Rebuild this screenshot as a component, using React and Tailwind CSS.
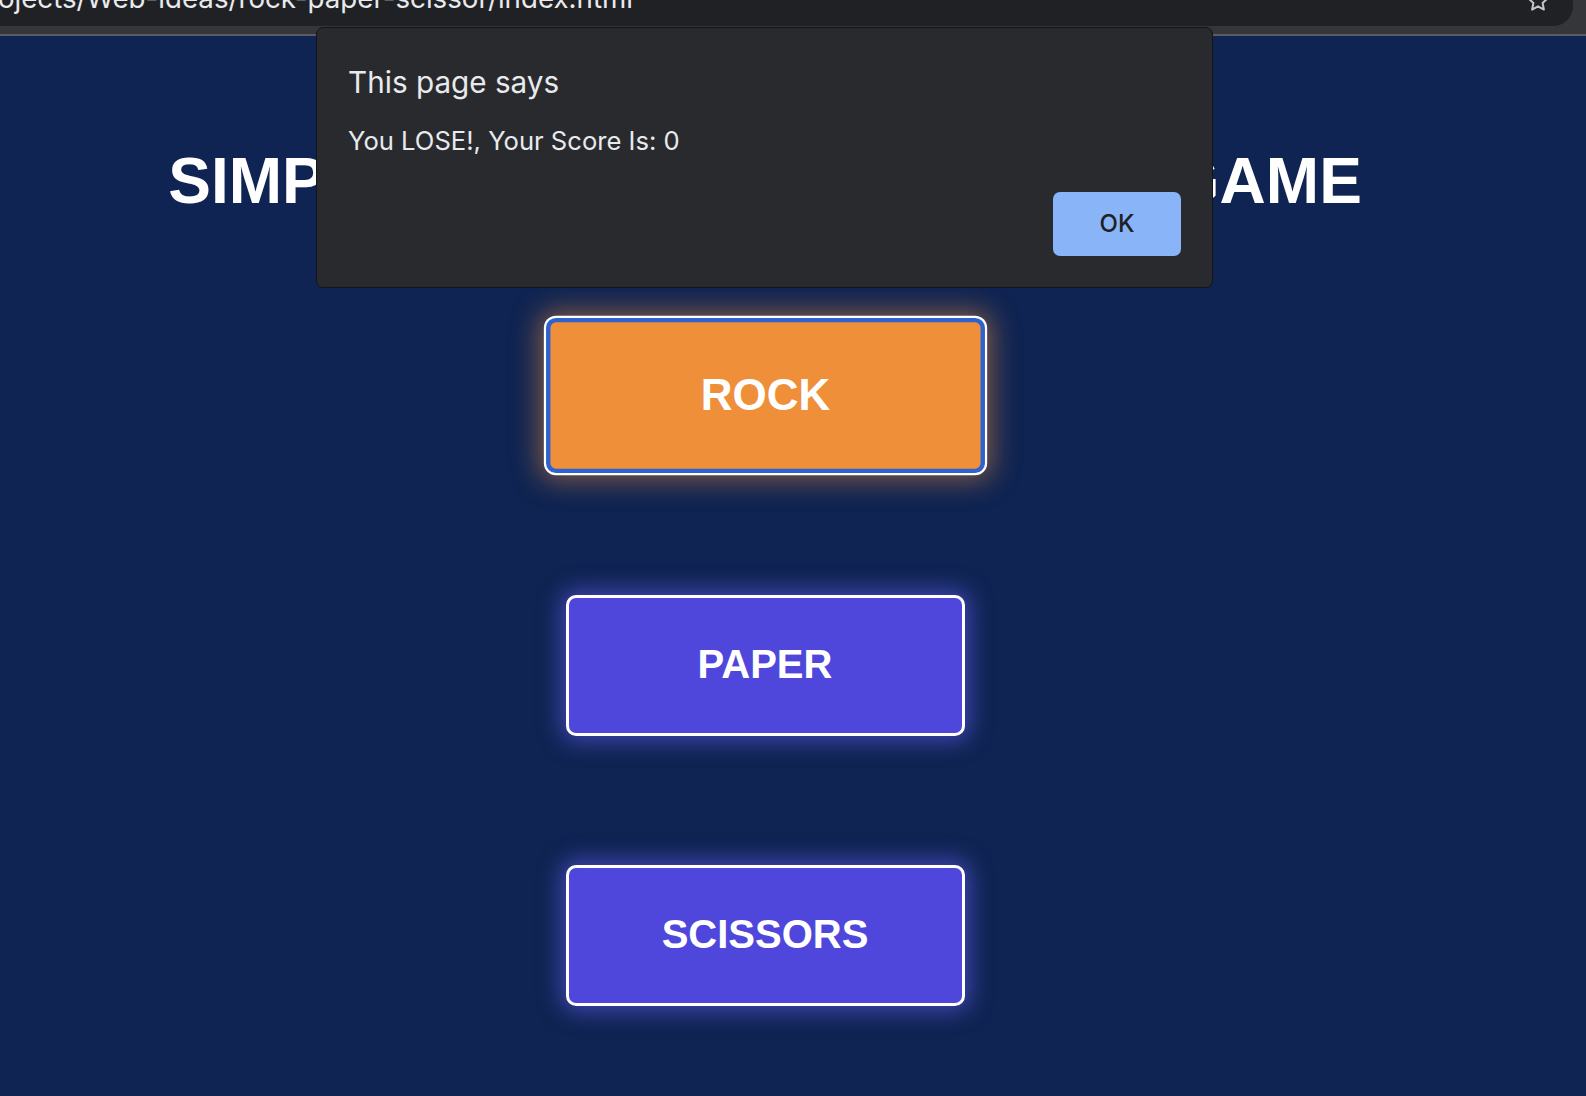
import React from "react";

function StarIcon() {
  return (
    <svg
      width="24"
      height="24"
      viewBox="0 0 24 24"
      fill="none"
      stroke="#c4c7c5"
      strokeWidth="2"
      strokeLinejoin="round"
      className="absolute right-[23px] top-[-11px]"
    >
      <path d="M12 2.5l2.9 6.1 6.6.8-4.9 4.6 1.3 6.6L12 17.3l-5.9 3.3 1.3-6.6-4.9-4.6 6.6-.8z" />
    </svg>
  );
}

export default function App() {
  return (
    <div className="relative h-[1096px] w-full overflow-hidden bg-[#0f2452]">
      {/* Browser chrome */}
      <div className="flex h-[36px] flex-col bg-[#35363a]">
        <div className="relative h-[26px] w-[1573px] overflow-hidden rounded-br-[20px] bg-[#202124]">
          <div className="-mt-[16px] ml-[-29px] whitespace-nowrap font-['Inter',sans-serif] text-[27.7px] leading-[28px] text-[#e8eaed]">
            projects/Web-ideas/rock-paper-scissor/index.html
          </div>
          <StarIcon />
        </div>
        <div className="mt-auto h-[2px] bg-[#5a5b5f]" />
      </div>

      {/* Page */}
      <div className="flex flex-col items-center pr-[56px]">
        <h1 className="mt-[108px] whitespace-nowrap font-['Liberation_Sans',Arial,sans-serif] text-[64px] font-bold leading-[74px] text-white">
          SIMPLE ROCK PAPER SCISSOR GAME
        </h1>

        <div className="mt-[107px] flex flex-col items-center gap-[129px]">
          <button className="flex h-[141px] w-[399px] scale-110 items-center justify-center rounded-[9px] border-[4px] border-[#2e63cf] bg-[#ef8f3a] pb-[1px] font-['Liberation_Sans',Arial,sans-serif] text-[40px] font-bold text-white shadow-[0_0_0_2px_#ffffff,0_0_24px_6px_rgba(240,143,58,0.5)]">
            ROCK
          </button>
          <button className="flex h-[141px] w-[399px] items-center justify-center rounded-[10px] border-[3px] border-white bg-[#4f47dc] pb-[3px] font-['Liberation_Sans',Arial,sans-serif] text-[40px] font-bold text-white shadow-[0_0_22px_5px_rgba(104,96,255,0.55)]">
            PAPER
          </button>
          <button className="flex h-[141px] w-[399px] items-center justify-center rounded-[10px] border-[3px] border-white bg-[#4f47dc] pb-[3px] font-['Liberation_Sans',Arial,sans-serif] text-[40px] font-bold text-white shadow-[0_0_22px_5px_rgba(104,96,255,0.55)]">
            SCISSORS
          </button>
        </div>
      </div>

      {/* Alert dialog overlay */}
      <div className="absolute left-[316px] top-[27px] flex h-[261px] w-[897px] flex-col rounded-[7px] border border-[#141416] bg-[#292a2d] pl-[31px] pr-[31px] pt-[36px] font-['Inter',sans-serif]">
        <div className="text-[29.7px] leading-[36px] text-[#e8eaed]">This page says</div>
        <div className="mt-[26px] text-[25.6px] leading-[30px] text-[#e8eaed]">
          You LOSE!, Your Score Is: 0
        </div>
        <div className="mt-[36px] flex justify-end">
          <button className="flex h-[64px] w-[128px] items-center justify-center rounded-[7px] bg-[#8ab4f8] text-[24px] font-medium text-[#202124]">
            OK
          </button>
        </div>
      </div>
    </div>
  );
}
